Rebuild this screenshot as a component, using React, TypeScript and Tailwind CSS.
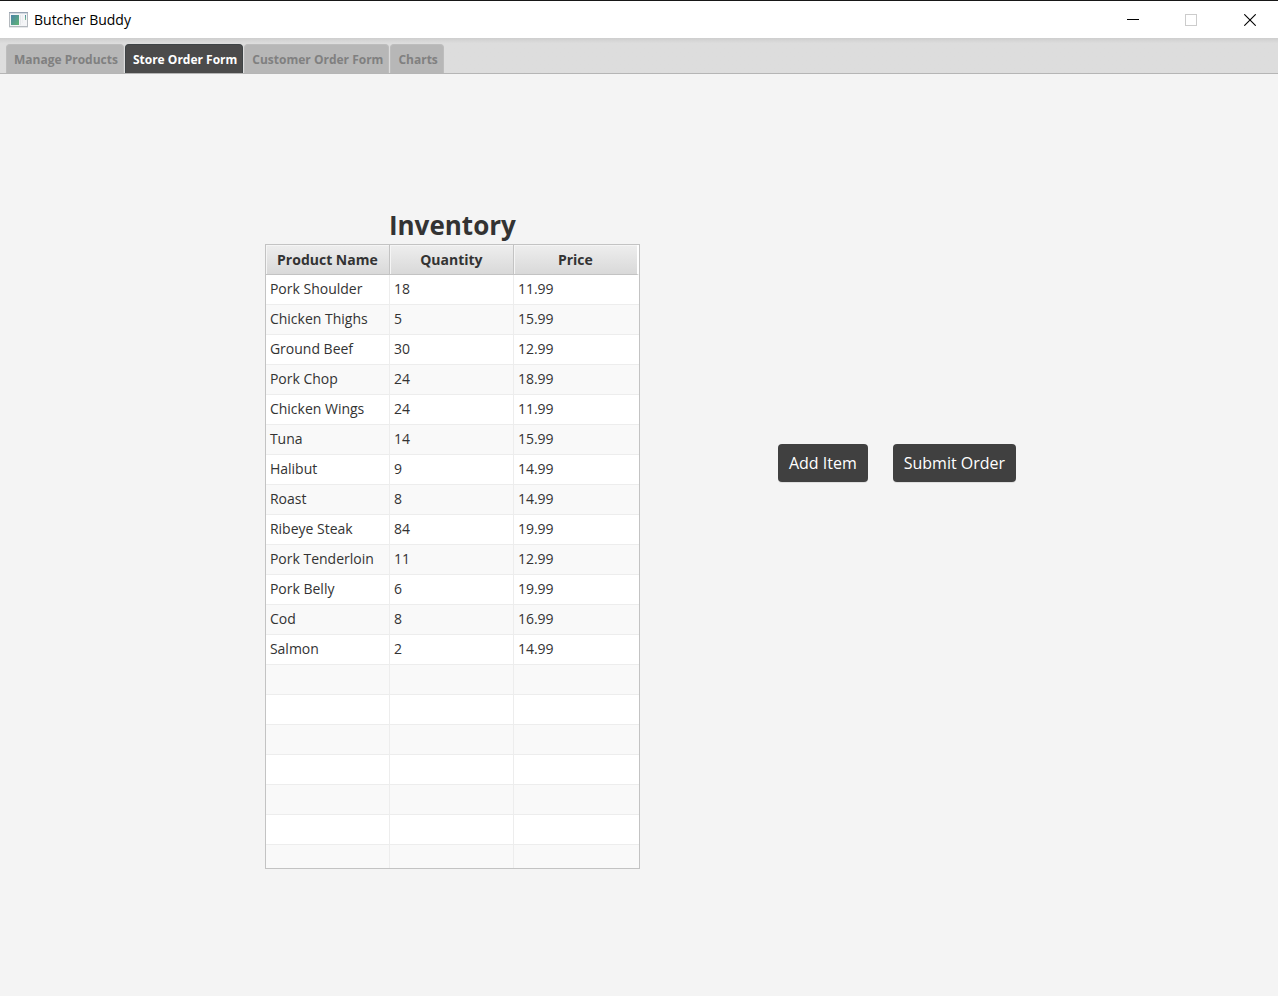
const tabs = ["Manage Products", "Store Order Form", "Customer Order Form", "Charts"];
const activeTab = "Store Order Form";

const products: [string, number, string][] = [
  ["Pork Shoulder", 18, "11.99"],
  ["Chicken Thighs", 5, "15.99"],
  ["Ground Beef", 30, "12.99"],
  ["Pork Chop", 24, "18.99"],
  ["Chicken Wings", 24, "11.99"],
  ["Tuna", 14, "15.99"],
  ["Halibut", 9, "14.99"],
  ["Roast", 8, "14.99"],
  ["Ribeye Steak", 84, "19.99"],
  ["Pork Tenderloin", 11, "12.99"],
  ["Pork Belly", 6, "19.99"],
  ["Cod", 8, "16.99"],
  ["Salmon", 2, "14.99"],
];

const emptyRows = [0, 1, 2, 3, 4, 5, 6];

function AppIcon() {
  return (
    <svg width="19" height="16" viewBox="0 0 19 16" aria-hidden="true">
      <defs>
        <linearGradient id="screen" x1="0" y1="0" x2="1" y2="1">
          <stop offset="0" stopColor="#4a83a8" />
          <stop offset="1" stopColor="#5fb573" />
        </linearGradient>
        <linearGradient id="meter" x1="0" y1="0" x2="0" y2="1">
          <stop offset="0" stopColor="#4d8ba5" />
          <stop offset="1" stopColor="#7fc48c" />
        </linearGradient>
      </defs>
      <rect x="0.5" y="0.5" width="18" height="14" fill="#f4f5f7" stroke="#b4b9be" />
      <path d="M0 0.5h19" stroke="#98a4b3" />
      <path d="M1 1.5h17" stroke="#d3dae1" />
      <rect x="2" y="3" width="8" height="10" fill="url(#screen)" />
      <path d="M11.5 3v10" stroke="#e4e6e9" />
      <path d="M13 3h1v8h-1z" fill="#eceef0" />
      <path d="M16 3h1v5h-1z" fill="url(#meter)" />
      <path d="M0 15.5h19" stroke="#e6e8ea" />
    </svg>
  );
}

function TitleBar() {
  return (
    <header className="flex h-[38px] shrink-0 items-center border-t border-[#171717] bg-white pl-[9px]">
      <AppIcon />
      <span className="ml-1.5 grow text-sm leading-5 text-black">Butcher Buddy</span>
      <div className="flex h-full text-black">
        <button type="button" aria-label="Minimize" className="flex w-[58px] items-center justify-center">
          <svg width="12" height="12" viewBox="0 0 12 12" shapeRendering="crispEdges">
            <path d="M0 5.5h12" stroke="currentColor" />
          </svg>
        </button>
        <button type="button" aria-label="Maximize" disabled className="flex w-[58px] items-center justify-center">
          <svg width="12" height="12" viewBox="0 0 12 12" shapeRendering="crispEdges">
            <rect x="0.5" y="0.5" width="11" height="11" fill="none" stroke="#cccccc" />
          </svg>
        </button>
        <button type="button" aria-label="Close" className="flex w-[58px] items-center justify-center pl-0.5">
          <svg width="12" height="12" viewBox="0 0 12 12">
            <path d="M0.3 0.3l11.4 11.4M11.7 0.3L0.3 11.7" stroke="currentColor" strokeWidth="1.1" />
          </svg>
        </button>
      </div>
    </header>
  );
}

function TabBar() {
  return (
    <nav
      role="tablist"
      className="flex h-9 shrink-0 items-end gap-px border-b border-[#b5b5b5] bg-linear-to-b from-[#cecece] to-[#dddddd] to-15% pl-1.5"
    >
      {tabs.map((tab) => (
        <button
          key={tab}
          type="button"
          role="tab"
          aria-selected={tab === activeTab}
          className={
            tab === activeTab
              ? "h-[29px] rounded-t border border-b-0 border-[#3f4446] bg-[#4b4b4b] pt-0.5 pr-[5px] pl-[7px] text-xs font-bold text-white"
              : "h-[29px] rounded-t border border-b-0 border-[#bdbdbd] bg-[#b7b7b7] pt-0.5 pr-[5px] pl-[7px] text-xs font-bold text-[#808080]"
          }
        >
          {tab}
        </button>
      ))}
    </nav>
  );
}

const headerCell =
  "h-[30px] border-r border-b border-[#c3c3c3] bg-linear-to-b from-[#eeeeee] to-[#d9d9d9] px-0 pt-0.5 pb-0 text-center text-sm leading-5 font-bold shadow-[inset_1px_1px_0_#f5f5f5]";
const cell = "h-[30px] border-r border-b border-[#ededed] px-1 py-0 leading-5 last:border-r-0";

function InventoryTable() {
  return (
    <section className="flex w-[375px] flex-col">
      <h1 className="pt-1 text-center text-[26px] leading-[38px] font-bold">Inventory</h1>
      <div className="h-[625px] overflow-hidden border border-[#c3c3c3] bg-white">
        <table className="w-full table-fixed border-separate border-spacing-0 text-sm">
          <colgroup>
            <col className="w-[124px]" />
            <col className="w-[124px]" />
            <col />
          </colgroup>
          <thead>
            <tr>
              <th className={headerCell}>Product Name</th>
              <th className={headerCell}>Quantity</th>
              <th className={`${headerCell} border-r-2 border-r-white`}>Price</th>
            </tr>
          </thead>
          <tbody>
            {products.map(([name, quantity, price]) => (
              <tr key={name} className="even:bg-[#f9f9f9]">
                <td className={cell}>{name}</td>
                <td className={cell}>{quantity}</td>
                <td className={cell}>{price}</td>
              </tr>
            ))}
            {emptyRows.map((row) => (
              <tr key={row} className="even:bg-[#f9f9f9]">
                <td className={cell} />
                <td className={cell} />
                <td className={cell} />
              </tr>
            ))}
          </tbody>
        </table>
      </div>
    </section>
  );
}

const actionButton =
  "h-[38px] rounded bg-[#404040] px-[11px] text-base leading-6 text-white shadow-[0_1px_0_#dedede]";

export default function App() {
  return (
    <div className="flex min-h-screen flex-col bg-[#f4f4f4] font-['Open_Sans','Noto_Sans',sans-serif] text-[#333333]">
      <TitleBar />
      <TabBar />
      <main className="flex grow items-center justify-center">
        <div className="flex items-start gap-[138px] pl-[3px]">
          <InventoryTable />
          <div className="flex gap-[25px] pt-[242px]">
            <button type="button" className={actionButton}>Add Item</button>
            <button type="button" className={actionButton}>Submit Order</button>
          </div>
        </div>
      </main>
    </div>
  );
}
